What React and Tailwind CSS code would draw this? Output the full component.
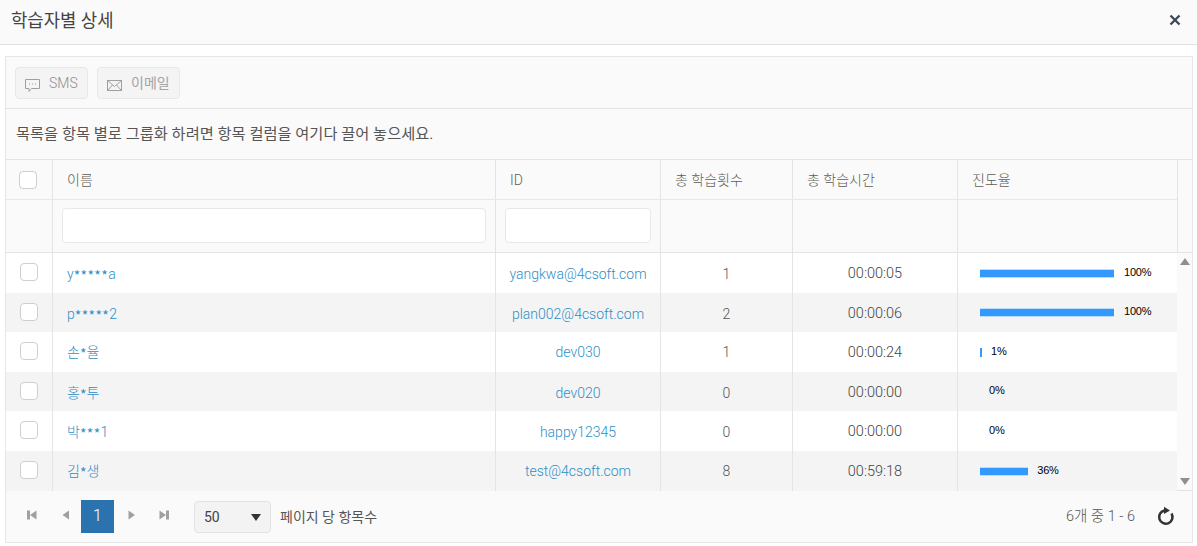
import React from "react";

const rows = [
  { name: ["y", "*****", "a"], id: "yangkwa@4csoft.com", count: "1", time: "00:00:05", pct: 100, h: "h-10", t: "pt-[2px]" },
  { name: ["p", "*****", "2"], id: "plan002@4csoft.com", count: "2", time: "00:00:06", pct: 100, h: "h-[39px]", t: "pt-[3px]" },
  { name: ["손", "*", "율"], id: "dev030", count: "1", time: "00:00:24", pct: 1, h: "h-10", t: "pt-px" },
  { name: ["홍", "*", "투"], id: "dev020", count: "0", time: "00:00:00", pct: 0, h: "h-[39px]", t: "pt-[3px]" },
  { name: ["박", "***", "1"], id: "happy12345", count: "0", time: "00:00:00", pct: 0, h: "h-10", t: "pt-[2px]" },
  { name: ["김", "*", "생"], id: "test@4csoft.com", count: "8", time: "00:59:18", pct: 36, h: "h-10", t: "pt-px" },
];

const cols = "grid grid-cols-[46px_443px_165px_132px_165px_220px]";

function Check({ className = "" }) {
  return <span className={"block w-[18px] h-[18px] rounded-[4px] border border-[#cfcfcf] bg-white " + className} />;
}

function Head({ children }) {
  return <div className="flex items-center border-l border-[#e4e4e4] pl-[14px] pt-px text-[14px] font-light text-[#5f5a56]">{children}</div>;
}

function Bar({ pct }) {
  const w = pct === 1 ? 2 : (pct / 100) * 134;
  return (
    <div className="flex items-center border-l border-[#e4e4e4] pl-[22px]">
      {pct > 0 && (
        <span
          className={"block box-content h-[7px] bg-[#3399ff] border-y " + (pct > 1 ? "border-[#bcdcfb]" : "border-[#3399ff]")}
          style={{ width: w }}
        />
      )}
      <span className={"text-[11px] text-black font-['Liberation_Sans'] -mt-0.5 tracking-[-0.2px] " + (pct === 100 ? "ml-[10px]" : "ml-[9px]")}>{pct}%</span>
    </div>
  );
}

function PagerIcon({ type }) {
  const c = "#a0a0a0";
  return (
    <svg width="10" height="10" viewBox="0 0 10 10" fill={c} className="shrink-0 -mt-0.5">
      {type === "first" && <><rect x="0" y="0.5" width="3" height="9" /><path d="M9.500 0.500v9L3 5z" /></>}
      {type === "prev" && <path d="M8 0.500v9L1.500 5z" />}
      {type === "next" && <path d="M1.500 0.500v9L8 5z" />}
      {type === "last" && <><rect x="7" y="0.5" width="3" height="9" /><path d="M.5 0.500v9L7 5z" /></>}
    </svg>
  );
}

export default function App() {
  return (
    <div className="w-[1197px] h-[546px] bg-white overflow-hidden font-['Roboto','Noto_Sans_CJK_KR',sans-serif] text-[14px] text-[#555]">
      <div className="h-[45px] bg-[#fafafa] border-b border-[#e2e2e2] flex items-center justify-between pl-[11px] pr-[15px]">
        <span className="text-[17.800px] text-[#444] -mt-px">학습자별 상세</span>
        <svg width="14" height="14" viewBox="0 0 14 14" className="-mt-1" stroke="#3f4a58" strokeWidth="2.4" fill="none">
          <path d="M2.500 2.500l9 9M11.500 2.500l-9 9" />
        </svg>
      </div>

      <div className="mt-[11px] ml-[5px] w-[1188px] h-[487px] border border-[#e6e6e6] flex flex-col">
        <div className="h-[52px] shrink-0 bg-[#fafafa] border-b border-[#e4e4e4] flex items-center gap-[9px] pl-[9px] pt-px">
          <div className="h-[32px] w-[73px] rounded-[4px] border border-[#e8e8e8] bg-[#f4f4f4] flex items-center pl-[9px] gap-[9px] font-light text-[#8d8d8d]">
            <svg width="15" height="15" viewBox="0 0 15 15" fill="none" stroke="#a0a0a0" className="mt-1 shrink-0">
              <path d="M.5 1.500h14v9h-8l-2.500 3v-3H.5z" />
              <path d="M4 6h1M7 6h1M10 6h1" />
            </svg>
            <span>SMS</span>
          </div>
          <div className="h-[32px] w-[83px] rounded-[4px] border border-[#e8e8e8] bg-[#f4f4f4] flex items-center pl-[9px] gap-[9px] text-[#a3a3a3]">
            <svg width="15" height="13" viewBox="0 0 15 13" fill="none" stroke="#a0a0a0" className="mt-1 shrink-0">
              <rect x=".5" y="1.500" width="14" height="10" />
              <path d="M.5 1.500l7 6 7-6M.5 11.500l5-5.500M14.500 11.500l-5-5.500" />
            </svg>
            <span>이메일</span>
          </div>
        </div>

        <div className="h-[51px] shrink-0 bg-[#fafafa] border-b border-[#e4e4e4] flex items-center pl-[10px] text-[15.280px] text-[#555]">
          목록을 항목 별로 그룹화 하려면 항목 컬럼을 여기다 끌어 놓으세요.
        </div>

        <div className="shrink-0 flex bg-[#fafafa] border-b border-[#e4e4e4]">
          <div className="w-[1171px]">
            <div className={cols + " h-[40px] border-b border-[#e8e8e8]"}>
              <div className="flex items-center pl-[13px]"><Check /></div>
              <Head>이름</Head>
              <Head>ID</Head>
              <Head>총 학습횟수</Head>
              <Head>총 학습시간</Head>
              <Head>진도율</Head>
            </div>
            <div className={cols + " h-[52px]"}>
              <div />
              <div className="flex items-center border-l border-[#e4e4e4] pl-[9px] pb-px">
                <div className="w-[424px] h-[35px] rounded-[4px] border border-[#e8e8e8] bg-white" />
              </div>
              <div className="flex items-center border-l border-[#e4e4e4] pl-[9px] pb-px">
                <div className="w-[146px] h-[35px] rounded-[4px] border border-[#e8e8e8] bg-white" />
              </div>
              <div className="border-l border-[#e4e4e4]" />
              <div className="border-l border-[#e4e4e4]" />
              <div className="border-l border-[#e4e4e4]" />
            </div>
          </div>
          <div className="flex-1 border-l border-[#e4e4e4]" />
        </div>

        <div className="relative flex-1 flex min-h-0">
          <div className="w-[1171px]">
            {rows.map((r, i) => (
              <div key={i} className={cols + " " + r.h + " " + (i % 2 ? "bg-[#f4f4f4]" : "bg-white")}>
                <div className="flex items-center pl-[14px] pb-[2px]"><Check /></div>
                <div className={"flex items-center border-l border-[#e4e4e4] pl-[14px] font-light text-[#2f8ec6] " + r.t}>
                  <span>
                    {r.name[0]}
                    <span className={"inline-block translate-y-[2px] font-['Noto_Sans_CJK_KR'] font-normal text-[14px] leading-none " + (r.name[1].length > 1 ? "tracking-[0.35px]" : "")}>{r.name[1]}</span>
                    {r.name[2]}
                  </span>
                </div>
                <div className={"flex items-center justify-center border-l border-[#e4e4e4] font-light text-[#2f8ec6] " + r.t}>{r.id}</div>
                <div className={"flex items-center justify-center border-l border-[#e4e4e4] font-light text-[#555] " + r.t}>{r.count}</div>
                <div className={"flex items-center justify-center border-l border-[#e4e4e4] font-light text-[#444] text-[14.500px] " + r.t}>{r.time}</div>
                <Bar pct={r.pct} />
              </div>
            ))}
          </div>
          <div className="flex-1 bg-[#fafafa] flex flex-col items-center justify-between py-[5px]">
            <svg width="10" height="7" viewBox="0 0 10 7" fill="#8f8f8f"><path d="M5 0l5 7H0z" /></svg>
            <svg width="10" height="7" viewBox="0 0 10 7" fill="#8f8f8f"><path d="M0 0h10L5 7z" /></svg>
          </div>
        </div>

        <div className="h-[52px] shrink-0 bg-[#fafafa] border-t border-[#e4e4e4] flex items-center pl-[21px] pr-[17px] pb-[1px]">
          <PagerIcon type="first" />
          <span className="w-[24px]" />
          <PagerIcon type="prev" />
          <div className="ml-[10px] w-[33px] h-[33px] bg-[#2b73ae] text-white text-[16px] font-light flex items-center justify-center">1</div>
          <span className="w-[13px]" />
          <PagerIcon type="next" />
          <span className="w-[22px]" />
          <PagerIcon type="last" />
          <div className="ml-[25px] mt-[2px] w-[77px] h-[32px] rounded-[4px] border border-[#e2e2e2] bg-[#f3f3f3] flex items-center justify-between pl-[9px] pr-[9px] text-[#444]">
            <span>50</span>
            <svg width="10" height="7" viewBox="0 0 10 7" fill="#333"><path d="M0 0h10L5 7z" /></svg>
          </div>
          <span className="ml-[9px] mt-[2px] text-[#555]">페이지 당 항목수</span>
          <span className="ml-auto mt-[2px] text-[#555] font-light text-[14.500px]">6개 중 1 - 6</span>
          <svg width="20" height="20" viewBox="0 0 20 20" fill="none" className="ml-[20px]">
            <path d="M9.500 4.500A6.700 6.700 0 1 0 16.500 7.500" stroke="#333" strokeWidth="2.500" />
            <path d="M9 0.800l6 3.700-6 3.500z" fill="#333" />
          </svg>
        </div>
      </div>
    </div>
  );
}
